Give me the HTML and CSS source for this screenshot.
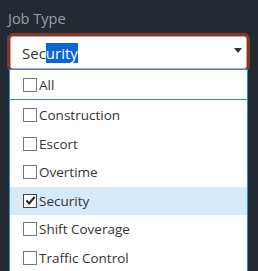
FILE: index.html
```html
<!DOCTYPE html>
<html>
<head>
<meta charset="utf-8">
<link rel="stylesheet" href="styles.css">
</head>
<body>
<div class="field">
  <div class="label">Job Type</div>
  <div class="select">
    <div class="input"><span class="typed">Sec</span><span class="sel">urity</span></div>
    <svg class="arrow" width="8" height="6" viewBox="0 0 8 6"><path d="M0 0H8L4 5Z" fill="#333"/></svg>
    <div class="menu">
      <div class="opt all"><span class="box"></span><span>All</span></div>
      <div class="list">
        <div class="opt"><span class="box"></span><span>Construction</span></div>
        <div class="opt"><span class="box"></span><span>Escort</span></div>
        <div class="opt"><span class="box"></span><span>Overtime</span></div>
        <div class="opt active"><span class="box checked"><svg width="11" height="11" viewBox="0 0 11 11"><path d="M1.5 5.5L4.2 8.4L9.6 2" fill="none" stroke="#222" stroke-width="2"/></svg></span><span>Security</span></div>
        <div class="opt"><span class="box"></span><span>Shift Coverage</span></div>
        <div class="opt"><span class="box"></span><span>Traffic Control</span></div>
      </div>
    </div>
  </div>
</div>
</body>
</html>
```
FILE: styles.css
```css
html, body {
  margin: 0;
  height: 100%;
  overflow: hidden;
}
body {
  background: #242a31;
  font-family: "Open Sans", "Noto Sans", sans-serif;
}
.field {
  padding: 9px 8px 0 7px;
}
.label {
  font-size: 14.5px;
  line-height: 20px;
  color: #9ca0a5;
  padding-left: 1px;
  margin-bottom: 4px;
}
.select {
  position: relative;
  padding: 3px;
}
.input {
  height: 33px;
  box-sizing: border-box;
  background: #fff;
  border: 1px solid #e39a84;
  border-radius: 3px;
  box-shadow: 0 0 0 3px #7a3b2c;
  padding-left: 11px;
  display: flex;
  align-items: center;
  font-size: 15px;
  color: #333;
}
.sel {
  background: #0a66d2;
  color: #fff;
}
.arrow {
  position: absolute;
  right: 8px;
  top: 15px;
}
.menu {
  position: absolute;
  left: 2px;
  top: 36px;
  width: 239px;
  box-sizing: border-box;
  background: #fff;
  border: 1px solid #2a8ae0;
  font-size: 13.5px;
  color: #333;
}
.opt {
  display: flex;
  align-items: center;
  height: 28.5px;
  padding-left: 13px;
}
.opt.all {
  height: 30px;
  padding-top: 1px;
  box-sizing: border-box;
  border-bottom: 1px solid #2a8ae0;
}
.list {
  padding-top: 1px;
}
.opt.active {
  background: #d5eafb;
}
.box {
  width: 12px;
  height: 12px;
  border: 1px solid #777;
  background: #fff;
  margin-right: 2px;
  flex: none;
  display: flex;
  align-items: center;
  justify-content: center;
}
.box.checked {
  border-color: #444;
}
```
